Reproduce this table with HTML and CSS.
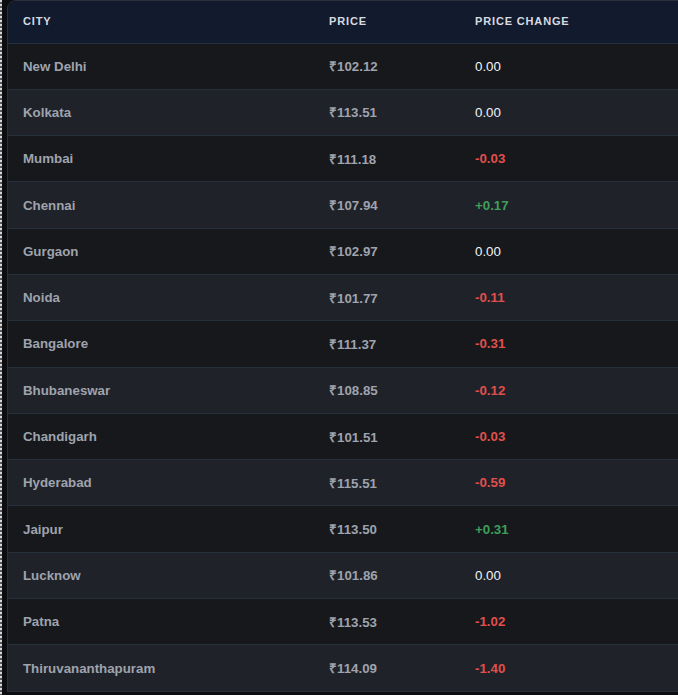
FILE: index.html
```html
<!DOCTYPE html>
<html>
<head>
<meta charset="utf-8">
<link rel="stylesheet" href="styles.css">
</head>
<body>
<div class="edge"></div>
<div class="card">
  <table class="prices">
    <thead>
      <tr><th class="c-city">City</th><th class="c-price">Price</th><th class="c-change">Price Change</th></tr>
    </thead>
    <tbody>
      <tr><td>New Delhi</td><td>₹102.12</td><td class="flat">0.00</td></tr>
      <tr><td>Kolkata</td><td>₹113.51</td><td class="flat">0.00</td></tr>
      <tr><td>Mumbai</td><td>₹111.18</td><td class="down">-0.03</td></tr>
      <tr><td>Chennai</td><td>₹107.94</td><td class="up">+0.17</td></tr>
      <tr><td>Gurgaon</td><td>₹102.97</td><td class="flat">0.00</td></tr>
      <tr><td>Noida</td><td>₹101.77</td><td class="down">-0.11</td></tr>
      <tr><td>Bangalore</td><td>₹111.37</td><td class="down">-0.31</td></tr>
      <tr><td>Bhubaneswar</td><td>₹108.85</td><td class="down">-0.12</td></tr>
      <tr><td>Chandigarh</td><td>₹101.51</td><td class="down">-0.03</td></tr>
      <tr><td>Hyderabad</td><td>₹115.51</td><td class="down">-0.59</td></tr>
      <tr><td>Jaipur</td><td>₹113.50</td><td class="up">+0.31</td></tr>
      <tr><td>Lucknow</td><td>₹101.86</td><td class="flat">0.00</td></tr>
      <tr><td>Patna</td><td>₹113.53</td><td class="down">-1.02</td></tr>
      <tr><td>Thiruvananthapuram</td><td>₹114.09</td><td class="down">-1.40</td></tr>
    </tbody>
  </table>
</div>
</body>
</html>
```
FILE: styles.css
```css
html, body {
  margin: 0;
  padding: 0;
  background: #0c0d10;
  height: 695px;
  overflow: hidden;
}
body {
  display: flex;
  align-items: flex-start;
  font-family: "Liberation Sans", Arial, sans-serif;
}
.edge {
  width: 2px;
  height: 695px;
  flex: none;
  background: repeating-linear-gradient(to bottom, #d8d8d8 0 2px, #5a5a5a 2px 4px);
}
.card {
  margin-left: 5px;
  flex: 1;
  border: 1px solid #2a2f3a;
  border-right: none;
  border-top-left-radius: 9px;
  overflow: hidden;
  background: #16181c;
}
.prices {
  width: 100%;
  border-collapse: collapse;
}
.prices th {
  height: 42px;
  padding: 0 0 2px 15px;
  background: #121a2d;
  color: #d7dae0;
  font-size: 11px;
  font-weight: bold;
  text-transform: uppercase;
  letter-spacing: 0.85px;
  text-align: left;
  border-bottom: 1px solid #25303d;
  box-sizing: border-box;
}
.c-city { width: 306px; }
.c-price { width: 146px; }
.prices td {
  height: 45.3px;
  padding: 0 0 0 15px;
  font-size: 13.3px;
  font-weight: bold;
  color: #9fa3ad;
  border-bottom: 1px solid #26303a;
}
.prices tbody tr:nth-child(odd) td { background: #16181c; }
.prices tbody tr:nth-child(even) td { background: #1f2229; }
.prices tbody tr:last-child td { border-bottom: none; }
.prices td.flat { color: #f2f3f5; font-weight: normal; }
.prices td.down { color: #e0504b; }
.prices td.up { color: #3f9e5a; }
```
